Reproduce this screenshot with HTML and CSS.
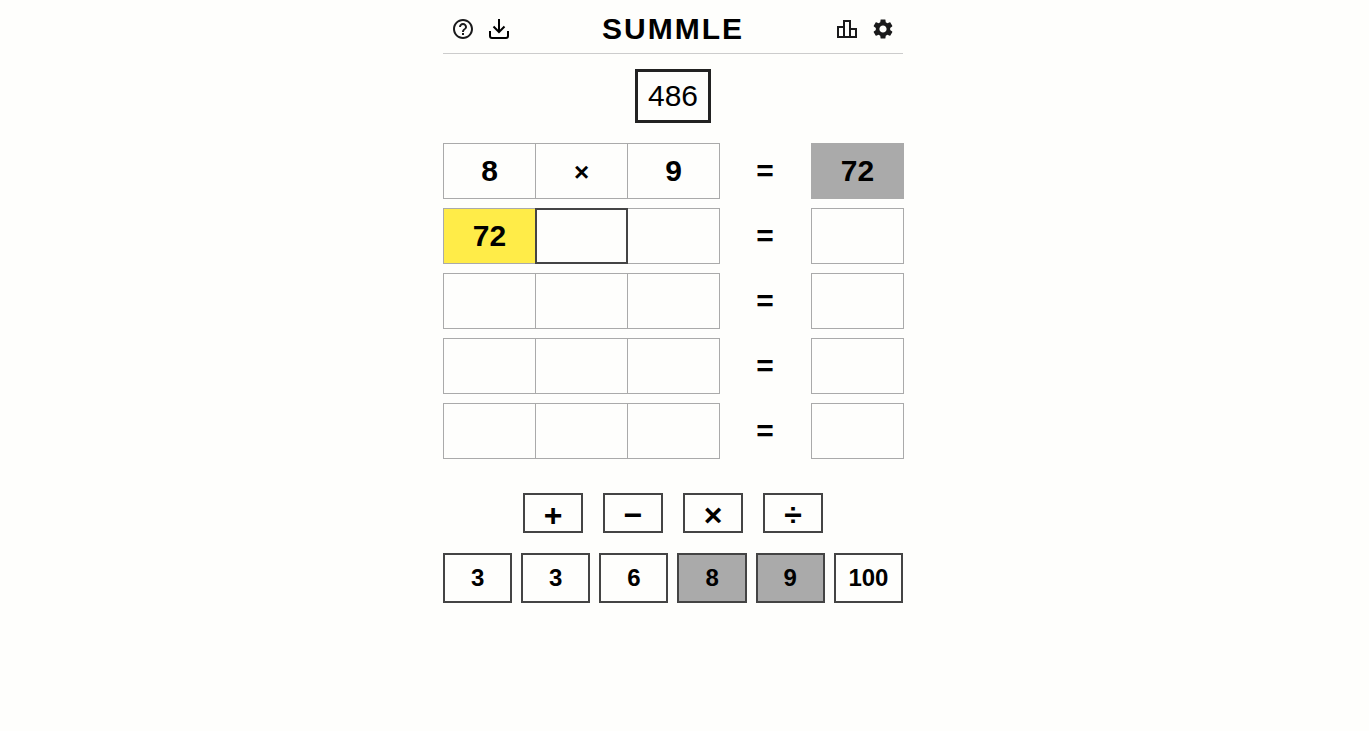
FILE: index.html
```html
<!DOCTYPE html>
<html lang="en">

<head>
    <meta charset="UTF-8">
    <meta name="viewport" content="width=device-width, initial-scale=1.0">
    <title>Summle</title>
    <link rel="stylesheet" href="styles.css">
</head>

<body>
    <div class="game">
        <header>
            <div class="icons">
                <button class="icon" aria-label="Help">
                    <svg viewBox="0 0 24 24"><path d="M11 18h2v-2h-2v2zm1-16C6.48 2 2 6.48 2 12s4.48 10 10 10 10-4.48 10-10S17.52 2 12 2zm0 18c-4.41 0-8-3.59-8-8s3.59-8 8-8 8 3.59 8 8-3.59 8-8 8zm0-14c-2.21 0-4 1.79-4 4h2c0-1.1.9-2 2-2s2 .9 2 2c0 2-3 1.75-3 5h2c0-2.25 3-2.5 3-5 0-2.21-1.79-4-4-4z"/></svg>
                </button>
                <button class="icon" aria-label="Install">
                    <svg class="outline" viewBox="0 0 24 24"><path d="M12 2v13M6.500 9.500L12 15l5.500-5.500M3 14v5a2 2 0 0 0 2 2h14a2 2 0 0 0 2-2v-5"/></svg>
                </button>
            </div>
            <h1>SUMMLE</h1>
            <div class="icons">
                <button class="icon" aria-label="Statistics">
                    <svg viewBox="0 0 24 24"><path d="M16 11V3H8v6H2v12h20V11h-6zm-6-6h4v14h-4V5zm-6 6h4v8H4v-8zm16 8h-4v-6h4v6z"/></svg>
                </button>
                <button class="icon" aria-label="Settings">
                    <svg viewBox="0 0 24 24"><path d="M19.140 12.940c.04-.3.06-.61.06-.94 0-.32-.02-.64-.07-.94l2.030-1.580c.18-.14.23-.41.12-.61l-1.920-3.320c-.12-.22-.37-.29-.59-.22l-2.390.96c-.5-.38-1.030-.7-1.620-.94l-.36-2.540c-.04-.24-.24-.41-.48-.41h-3.840c-.24 0-.43.17-.47.41l-.36 2.540c-.59.24-1.130.57-1.620.94l-2.390-.96c-.22-.08-.47 0-.59.22L2.740 8.870c-.12.21-.08.47.12.61l2.030 1.580c-.05.3-.09.63-.09.94s.02.64.07.94l-2.030 1.580c-.18.14-.23.41-.12.61l1.920 3.320c.12.22.37.29.59.22l2.390-.96c.5.38 1.030.7 1.620.94l.36 2.540c.05.24.24.41.48.41h3.840c.24 0 .44-.17.47-.41l.36-2.540c.59-.24 1.130-.56 1.620-.94l2.390.96c.22.08.47 0 .59-.22l1.920-3.320c.12-.22.07-.47-.12-.61l-2.010-1.580zM12 15.600c-1.980 0-3.600-1.620-3.600-3.600s1.620-3.600 3.600-3.600 3.600 1.620 3.600 3.600-1.620 3.600-3.600 3.600z"/></svg>
                </button>
            </div>
        </header>

        <main>
            <div class="target">486</div>

            <div class="board">
                <div class="row">
                    <div class="cell">8</div>
                    <div class="cell operator">×</div>
                    <div class="cell">9</div>
                    <div class="equals">=</div>
                    <div class="cell used">72</div>
                </div>
                <div class="row">
                    <div class="cell result">72</div>
                    <div class="cell operator active"></div>
                    <div class="cell"></div>
                    <div class="equals">=</div>
                    <div class="cell"></div>
                </div>
                <div class="row">
                    <div class="cell"></div>
                    <div class="cell operator"></div>
                    <div class="cell"></div>
                    <div class="equals">=</div>
                    <div class="cell"></div>
                </div>
                <div class="row">
                    <div class="cell"></div>
                    <div class="cell operator"></div>
                    <div class="cell"></div>
                    <div class="equals">=</div>
                    <div class="cell"></div>
                </div>
                <div class="row">
                    <div class="cell"></div>
                    <div class="cell operator"></div>
                    <div class="cell"></div>
                    <div class="equals">=</div>
                    <div class="cell"></div>
                </div>
            </div>

            <div class="operators">
                <button class="key">+</button>
                <button class="key">−</button>
                <button class="key">×</button>
                <button class="key">÷</button>
            </div>

            <div class="numbers">
                <button class="key">3</button>
                <button class="key">3</button>
                <button class="key">6</button>
                <button class="key used">8</button>
                <button class="key used">9</button>
                <button class="key">100</button>
            </div>
        </main>
    </div>
</body>

</html>
```
FILE: styles.css
```css
* {
    box-sizing: border-box;
}

body {
    margin: 0;
    padding-right: 23px;
    background-color: #fefefc;
    color: #000;
    font-family: "Liberation Sans", Arial, sans-serif;
}

.game {
    max-width: 460px;
    margin: 0 auto;
}

header {
    display: flex;
    justify-content: space-between;
    align-items: center;
    padding: 10px 8px 6px;
    border-bottom: 1px solid #ccc;
}

h1 {
    margin: 0;
    font-size: 30px;
    line-height: 37px;
    letter-spacing: 2px;
}

.icons {
    display: flex;
    gap: 12px;
}

.icon {
    display: block;
    width: 24px;
    height: 24px;
    padding: 0;
    border: none;
    background: none;
    cursor: pointer;
}

.icon svg {
    display: block;
    fill: #1a1a1b;
}

.icon .outline {
    fill: none;
    stroke: #000;
    stroke-width: 2;
}

.target {
    width: fit-content;
    margin: 15px auto 20px;
    padding: 0 10px;
    border: 3px solid #222;
    font-size: 30px;
    line-height: 48px;
}

.board {
    display: grid;
    gap: 9px;
}

.row {
    display: grid;
    grid-template-columns: repeat(5, 1fr);
    grid-template-rows: 56px;
    font-size: 30px;
    font-weight: bold;
    line-height: 54px;
    text-align: center;
}

.cell {
    margin-right: -1px;
    border: 1px solid #aaa;
}

.operator {
    padding-top: 2px;
    font-size: 26px;
    line-height: 52px;
}

.equals {
    line-height: 56px;
}

.used {
    background-color: #aaa;
}

.result {
    background-color: #ffec48;
}

.active {
    z-index: 1;
    border: 2px solid #444;
}

.key {
    padding: 0;
    border: 2px solid #444;
    background-color: #fefefc;
    color: #000;
    font-family: inherit;
    font-weight: bold;
    cursor: pointer;
}

.key.used {
    background-color: #aaa;
}

.operators {
    display: flex;
    justify-content: center;
    gap: 20px;
    margin: 34px 0 20px;
}

.operators .key {
    width: 60px;
    height: 40px;
    padding-top: 4px;
    font-size: 32px;
    line-height: 32px;
}

.numbers {
    display: grid;
    grid-template-columns: repeat(6, 1fr);
    gap: 9px;
}

.numbers .key {
    height: 50px;
    font-size: 24px;
}
```
